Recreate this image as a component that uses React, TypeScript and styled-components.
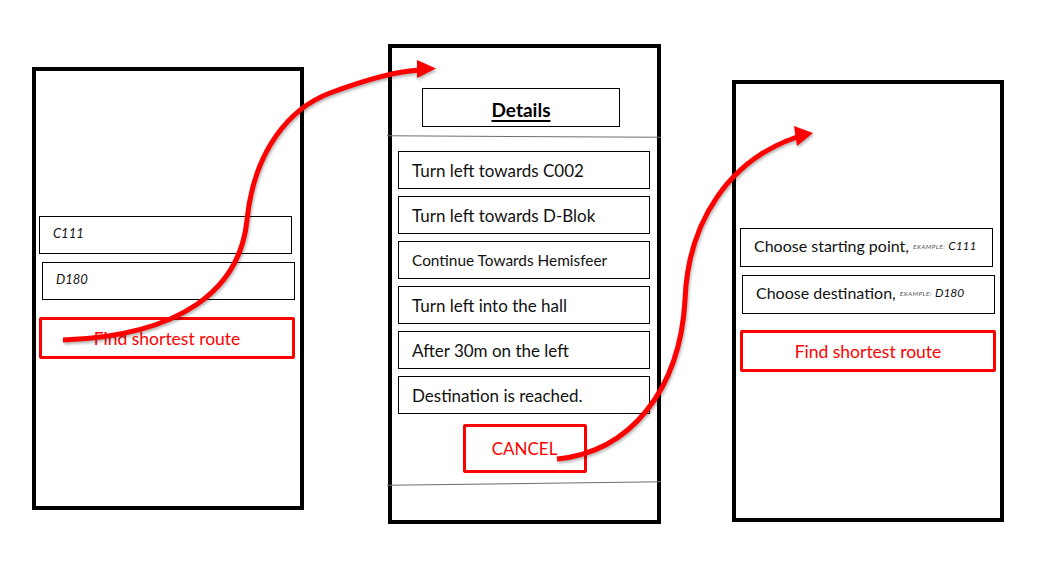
import React from "react";
import styled, { createGlobalStyle } from "styled-components";

const Global = createGlobalStyle`
  html, body { margin: 0; padding: 0; background: #fff; }
  body { font-family: Lato, "Noto Sans", sans-serif; color: #000; }
`;

const Canvas = styled.div`
  position: relative;
  width: 1040px;
  height: 576px;
  overflow: hidden;
  background: #fff;
`;

const Phone = styled.section<{ $x: number; $y: number; $w: number; $h: number; $pt: number }>`
  position: absolute;
  left: ${(p) => p.$x}px;
  top: ${(p) => p.$y}px;
  width: ${(p) => p.$w}px;
  height: ${(p) => p.$h}px;
  box-sizing: border-box;
  border: 4px solid #000;
  display: flex;
  flex-direction: column;
  align-items: flex-start;
  padding-top: ${(p) => p.$pt}px;
`;

const Field = styled.div<{ $dx: number; $mt?: number; $h?: number }>`
  box-sizing: border-box;
  width: 253px;
  height: ${(p) => p.$h ?? 38}px;
  margin-left: ${(p) => p.$dx}px;
  margin-top: ${(p) => p.$mt ?? 0}px;
  border: 1px solid #000;
  display: flex;
  align-items: center;
  padding: 0 13px 4px;
  white-space: nowrap;
`;

const Code = styled.span<{ $size: number }>`
  font-style: italic;
  font-size: ${(p) => p.$size}px;
  color: #111;
`;

const Prompt = styled.span`
  font-size: 16px;
  color: #111;
`;

const Example = styled.span`
  font-style: italic;
  font-size: 6.5px;
  letter-spacing: 0.4px;
  color: #555;
  margin: 2px 3px 0 4px;
`;

const RouteButton = styled.div<{ $dx: number; $mt: number }>`
  box-sizing: border-box;
  width: 256px;
  height: 42px;
  margin-left: ${(p) => p.$dx}px;
  margin-top: ${(p) => p.$mt}px;
  border: 3px solid #ff0000;
  border-radius: 2px;
  display: flex;
  align-items: center;
  justify-content: center;
  color: #ff0000;
  font-size: 17.5px;
`;

const Header = styled.div`
  box-sizing: border-box;
  width: 198px;
  height: 39px;
  margin-left: 30px;
  border: 1px solid #000;
  display: flex;
  align-items: center;
  justify-content: center;
  padding-top: 4px;
`;

const HeaderTitle = styled.span`
  font-weight: 700;
  font-size: 19px;
  text-decoration: underline;
  text-decoration-thickness: 1.5px;
  text-underline-offset: 3px;
`;

const Divider = styled.div<{ $mt: number; $tilt: number }>`
  align-self: stretch;
  margin: ${(p) => p.$mt}px -4px 0 -5px;
  height: 0;
  border-top: 1.5px solid #6e6e6e;
  transform: rotate(${(p) => p.$tilt}deg);
`;

const StepList = styled.div`
  display: flex;
  flex-direction: column;
  gap: 7px;
  margin: 14px 0 0 6px;
`;

const Step = styled.div<{ $small?: boolean }>`
  box-sizing: border-box;
  width: 252px;
  height: 38px;
  border: 1px solid #000;
  display: flex;
  align-items: center;
  padding-left: 13px;
  font-size: ${(p) => (p.$small ? 15.4 : 17)}px;
  color: #111;
  white-space: nowrap;
`;

const CancelButton = styled.div`
  box-sizing: border-box;
  align-self: center;
  width: 124px;
  height: 49px;
  margin-top: 10px;
  border: 3px solid #ff0000;
  border-radius: 2px;
  display: flex;
  align-items: center;
  justify-content: center;
  color: #ff0000;
  font-size: 17px;
`;

const ArrowLayer = styled.svg`
  position: absolute;
  left: 0;
  top: 0;
  width: 1040px;
  height: 576px;
  pointer-events: none;
  filter: drop-shadow(1.5px 2px 1.5px rgba(0, 0, 0, 0.3));
`;

const steps: { text: string; small?: boolean }[] = [
  { text: "Turn left towards C002" },
  { text: "Turn left towards D-Blok" },
  { text: "Continue Towards Hemisfeer", small: true },
  { text: "Turn left into the hall" },
  { text: "After 30m on the left" },
  { text: "Destination is reached." },
];

export default function App() {
  return (
    <>
      <Global />
      <Canvas>
        <Phone $x={32} $y={67} $w={272} $h={443} $pt={145}>
          <Field $dx={3}>
            <Code $size={13}>C111</Code>
          </Field>
          <Field $dx={6} $mt={8}>
            <Code $size={13}>D180</Code>
          </Field>
          <RouteButton $dx={3} $mt={17}>Find shortest route</RouteButton>
        </Phone>

        <Phone $x={388} $y={44} $w={273} $h={480} $pt={40}>
          <Header>
            <HeaderTitle>Details</HeaderTitle>
          </Header>
          <Divider $mt={9} $tilt={0.3} />
          <StepList>
            {steps.map((s) => (
              <Step key={s.text} $small={s.small}>
                {s.text}
              </Step>
            ))}
          </StepList>
          <CancelButton>CANCEL</CancelButton>
          <Divider $mt={10} $tilt={-0.7} />
        </Phone>

        <Phone $x={732} $y={80} $w={272} $h={442} $pt={144}>
          <Field $dx={4} $h={39}>
            <Prompt>Choose starting point,</Prompt>
            <Example>EXAMPLE:</Example>
            <Code $size={12}>C111</Code>
          </Field>
          <Field $dx={6} $mt={8} $h={39}>
            <Prompt>Choose destination,</Prompt>
            <Example>EXAMPLE:</Example>
            <Code $size={12}>D180</Code>
          </Field>
          <RouteButton $dx={4} $mt={16}>Find shortest route</RouteButton>
        </Phone>

        <ArrowLayer viewBox="0 0 1040 576">
          <path
            d="M63 340 C180 336 240 290 247 220 C254 150 290 108 330 93 C365 80 395 71 420 70"
            fill="none"
            stroke="#ff0000"
            strokeWidth={5}
          />
          <polygon points="417,60 436,68.5 417,78" fill="#ff0000" />
          <path
            d="M557 459 C630 452 680 390 685 300 C688 220 730 160 797 137"
            fill="none"
            stroke="#ff0000"
            strokeWidth={5}
          />
          <polygon points="794,126 813,133 797,146" fill="#ff0000" />
        </ArrowLayer>
      </Canvas>
    </>
  );
}
